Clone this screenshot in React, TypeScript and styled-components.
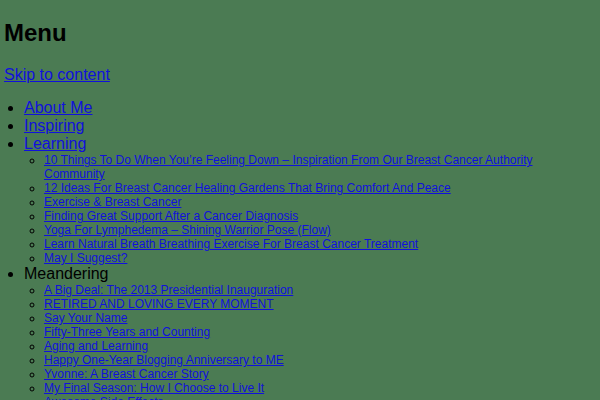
import React from 'react';
import styled, { createGlobalStyle } from 'styled-components';

const GlobalStyle = createGlobalStyle`
	html, body {
		margin: 0;
		padding: 0;
		background: #4b7b53;
	}
	body {
		font-family: 'Liberation Sans', Arial, sans-serif;
		color: #000;
	}
`;

const Page = styled.div`
	padding: 0 4px;
	overflow: hidden;
	height: 400px;
`;

const Title = styled.h1`
	font-size: 24px;
	font-weight: bold;
	line-height: 28px;
	margin: 19px 0 19px;
`;

const SkipLink = styled.a`
	display: block;
	font-size: 16px;
	line-height: 18px;
	color: #1010dd;
	text-decoration: underline;
	width: fit-content;
`;

const MenuList = styled.ul`
	list-style: disc;
	margin: 15px 0 0;
	padding-left: 20px;
	font-size: 16px;
	line-height: 18px;
`;

const SubList = styled.ul`
	list-style: circle;
	margin: 0;
	padding-left: 20px;
	font-size: 12px;
	line-height: 14px;
`;

const Item = styled.li``;

const MenuLink = styled.a`
	color: #1010dd;
	text-decoration: underline;
`;

interface IMenu {
	title: string;
	link?: boolean;
	children?: string[];
}

const menu: IMenu[] = [
	{ title: 'About Me', link: true },
	{ title: 'Inspiring', link: true },
	{
		title: 'Learning',
		link: true,
		children: [
			'10 Things To Do When You’re Feeling Down – Inspiration From Our Breast Cancer Authority Community',
			'12 Ideas For Breast Cancer Healing Gardens That Bring Comfort And Peace',
			'Exercise & Breast Cancer',
			'Finding Great Support After a Cancer Diagnosis',
			'Yoga For Lymphedema – Shining Warrior Pose (Flow)',
			'Learn Natural Breath Breathing Exercise For Breast Cancer Treatment',
			'May I Suggest?',
		],
	},
	{
		title: 'Meandering',
		children: [
			'A Big Deal: The 2013 Presidential Inauguration',
			'RETIRED AND LOVING EVERY MOMENT',
			'Say Your Name',
			'Fifty-Three Years and Counting',
			'Aging and Learning',
			'Happy One-Year Blogging Anniversary to ME',
			'Yvonne: A Breast Cancer Story',
			'My Final Season: How I Choose to Live It',
			'Awesome Side Effects',
			'Time Flies',
		],
	},
];

function App() {
	return (
		<Page>
			<GlobalStyle />
			<Title>Menu</Title>
			<SkipLink href='#content'>Skip to content</SkipLink>
			<MenuList>
				{menu.map((item) => (
					<Item key={item.title}>
						{item.link ? <MenuLink href='#'>{item.title}</MenuLink> : item.title}
						{item.children ? (
							<SubList>
								{item.children.map((sub) => (
									<Item key={sub}>
										<MenuLink href='#'>{sub}</MenuLink>
									</Item>
								))}
							</SubList>
						) : null}
					</Item>
				))}
			</MenuList>
		</Page>
	);
}

export default App;
